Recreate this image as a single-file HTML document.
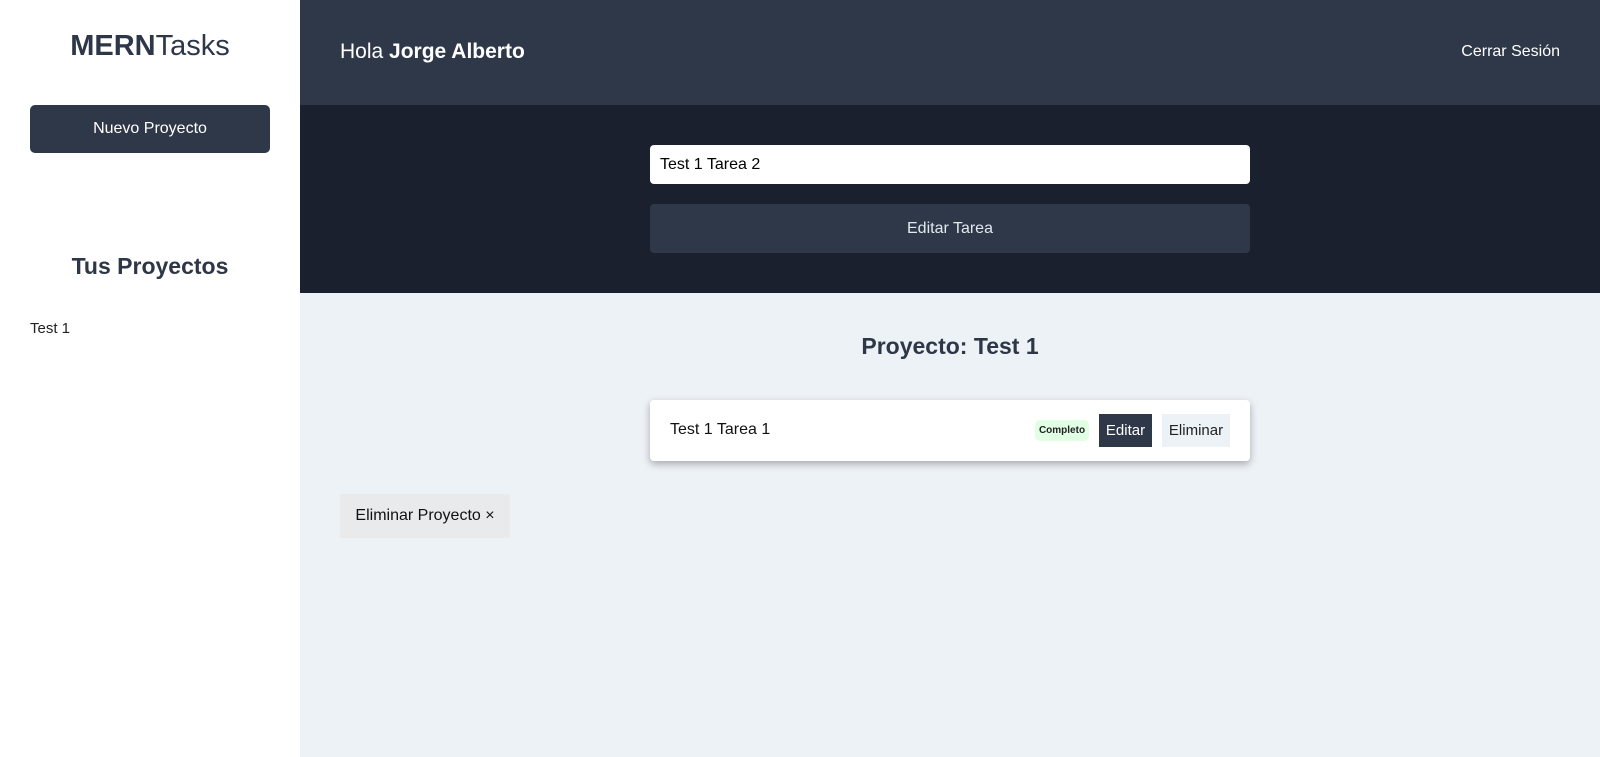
<!DOCTYPE html>
<html><head><meta charset="utf-8"><style>
*{margin:0;padding:0;box-sizing:border-box}
body{width:1600px;height:757px;overflow:hidden;font-family:"Liberation Sans",sans-serif;background:#edf2f7;position:relative}
.side{position:absolute;left:0;top:0;width:300px;height:757px;background:#fff}
.logo{position:absolute;top:30px;width:300px;text-align:center;font-size:29px;color:#2d3748}
.logo b{font-weight:900}
.nuevo{position:absolute;left:30px;top:105px;width:240px;height:48px;background:#2f3848;border-radius:5px;color:#fff;font-size:16px;text-align:center;line-height:48px}
.tus{position:absolute;top:253px;width:300px;text-align:center;font-size:23px;font-weight:bold;color:#2d3748}
.t1{position:absolute;left:30px;top:320px;font-size:15px;color:#222}
.hdr{position:absolute;left:300px;top:0;width:1300px;height:105px;background:#2f3848;color:#fff}
.hola{position:absolute;left:40px;top:40px;font-size:21px}
.cerrar{position:absolute;right:40px;top:43px;font-size:16px}
.band{position:absolute;left:300px;top:105px;width:1300px;height:188px;background:#1b202e}
.inp{position:absolute;left:650px;top:145px;width:600px;height:39px;background:#fff;border-radius:4px;font-size:16px;padding-left:10px;line-height:39px;color:#000}
.ebtn{position:absolute;left:650px;top:204px;width:600px;height:49px;background:#2f3848;border-radius:4px;color:#e2e8f0;font-size:16px;text-align:center;line-height:49px}
.ptitle{position:absolute;left:300px;width:1300px;top:333px;text-align:center;font-size:23px;font-weight:bold;color:#2d3748}
.card{position:absolute;left:650px;top:400px;width:600px;height:61px;background:#fff;border-radius:4px;box-shadow:0 3px 8px rgba(0,0,0,.3)}
.ct{position:absolute;left:20px;top:21px;font-size:16px;color:#111}
.badge{position:absolute;left:385px;top:20px;width:54px;height:21px;background:#e0ffe4;border-radius:5px;font-size:10px;font-weight:bold;text-align:center;line-height:21px;color:#222}
.ed{position:absolute;left:449px;top:14px;width:53px;height:33px;background:#2f3848;color:#fff;font-size:15px;text-align:center;line-height:33px}
.el{position:absolute;left:512px;top:14px;width:68px;height:33px;background:#edf2f7;color:#222;font-size:15px;text-align:center;line-height:33px}
.ep{position:absolute;left:340px;top:494px;width:170px;height:44px;background:#e8eaec;font-size:16px;text-align:center;line-height:44px;color:#111}
</style></head><body>
<div class="side">
<div class="logo"><b>MERN</b>Tasks</div>
<div class="nuevo">Nuevo Proyecto</div>
<div class="tus">Tus Proyectos</div>
<div class="t1">Test 1</div>
</div>
<div class="hdr"><div class="hola">Hola <b>Jorge Alberto</b></div><div class="cerrar">Cerrar Sesión</div></div>
<div class="band"></div>
<div class="inp">Test 1 Tarea 2</div>
<div class="ebtn">Editar Tarea</div>
<div class="ptitle">Proyecto: Test 1</div>
<div class="card"><div class="ct">Test 1 Tarea 1</div><div class="badge">Completo</div><div class="ed">Editar</div><div class="el">Eliminar</div></div>
<div class="ep">Eliminar Proyecto ×</div>
</body></html>
